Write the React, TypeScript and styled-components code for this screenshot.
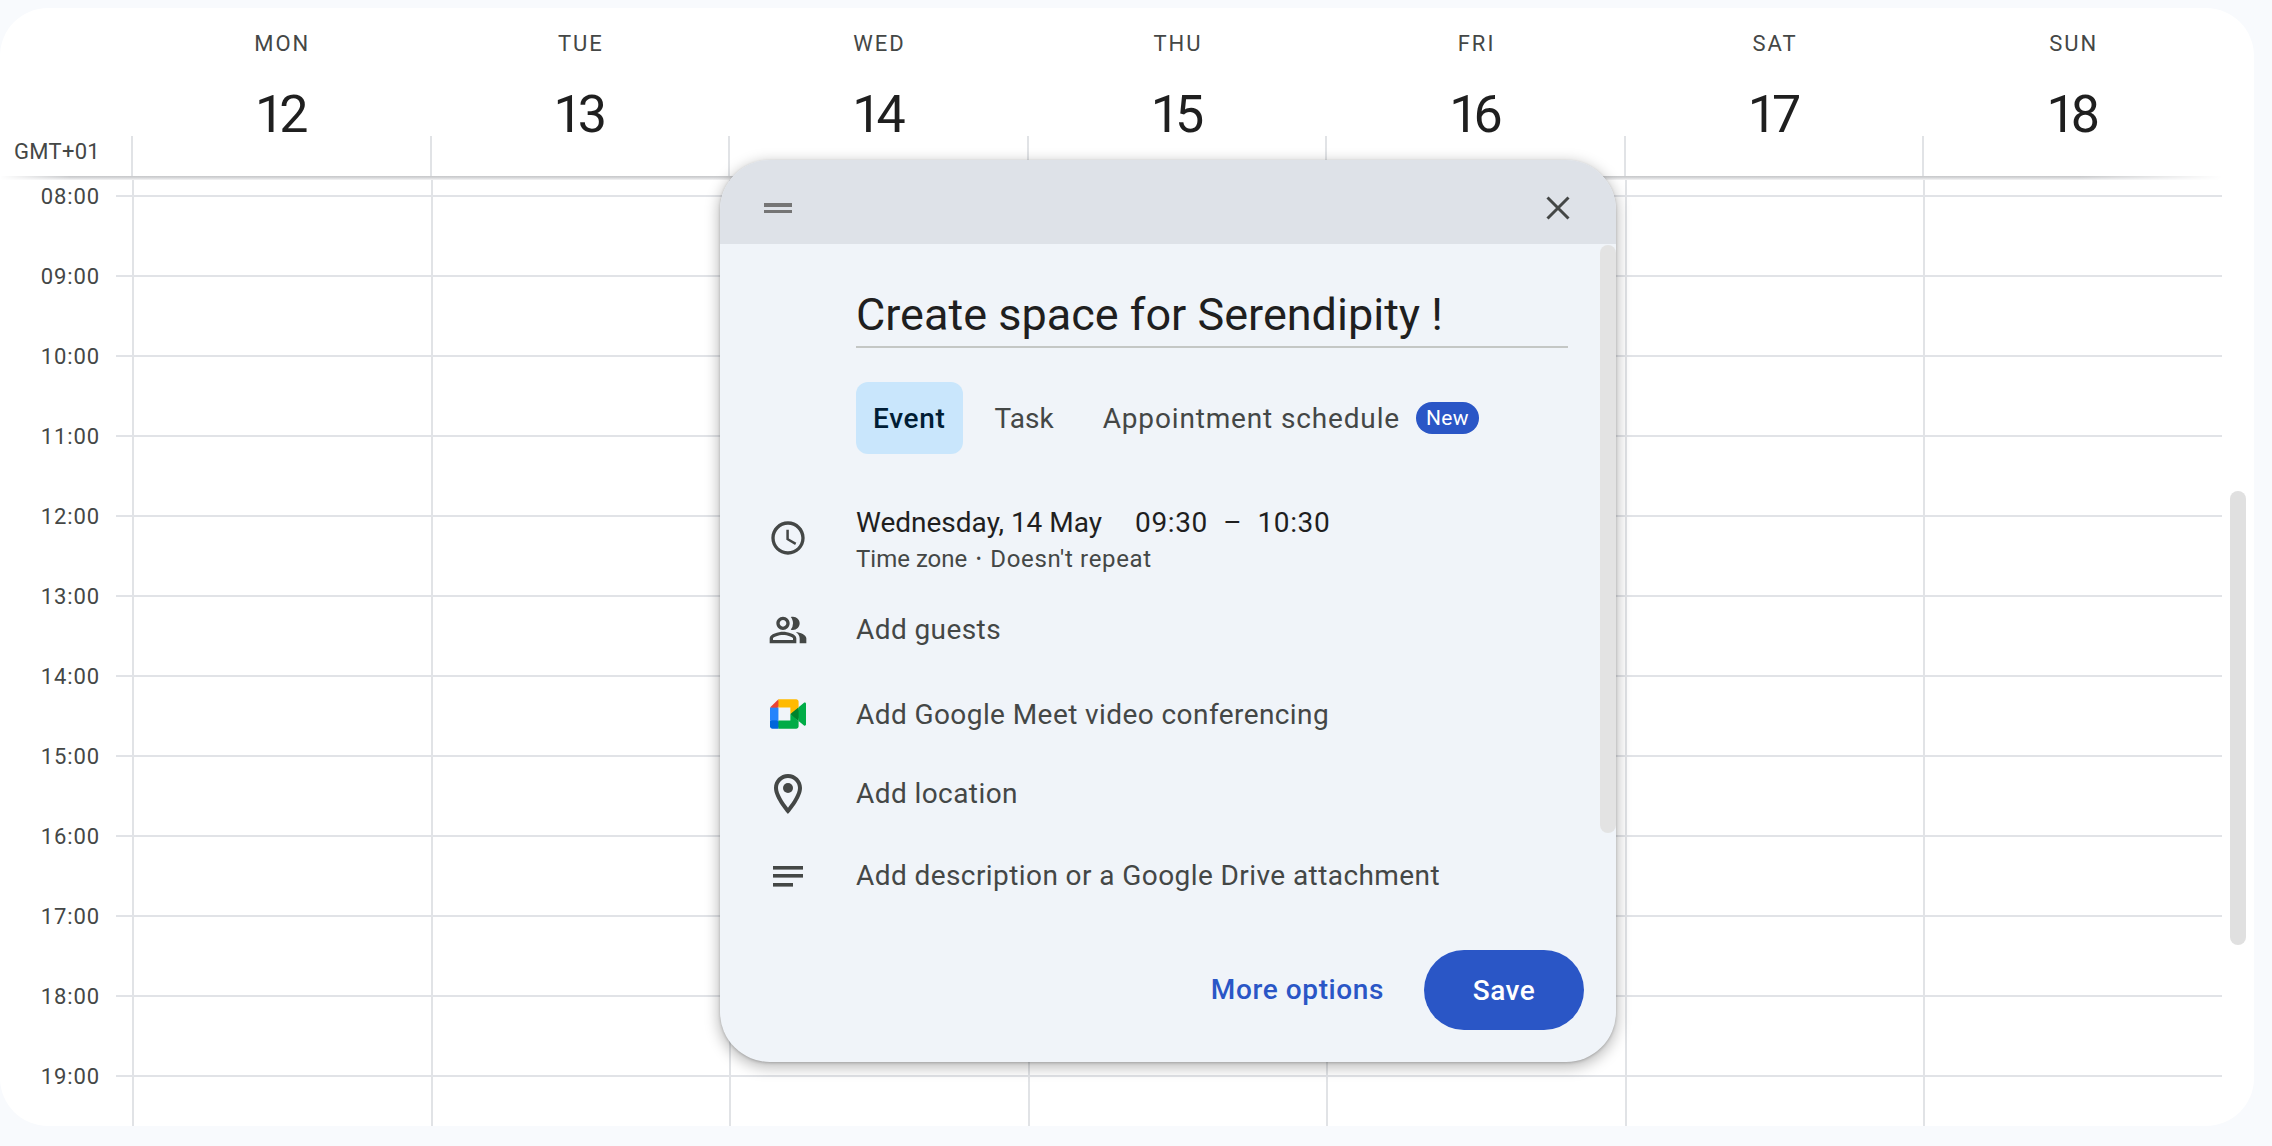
import React from 'react';
import styled, { createGlobalStyle } from 'styled-components';

const DAYS = [
  { name: 'MON', date: 12 },
  { name: 'TUE', date: 13 },
  { name: 'WED', date: 14 },
  { name: 'THU', date: 15 },
  { name: 'FRI', date: 16 },
  { name: 'SAT', date: 17 },
  { name: 'SUN', date: 18 },
];

const HOURS = ['08:00', '09:00', '10:00', '11:00', '12:00', '13:00', '14:00', '15:00', '16:00', '17:00', '18:00', '19:00'];

const GlobalStyle = createGlobalStyle`
  html, body {
    margin: 0;
    padding: 0;
    background: #f8fafd;
    font-family: Roboto, "Liberation Sans", sans-serif;
  }
`;

function Cells() {
  return (
    <CellGrid>
      <span />
      {DAYS.map((d) => (
        <DayCell key={d.name} />
      ))}
    </CellGrid>
  );
}

export default function App() {
  return (
    <Page>
      <GlobalStyle />
      <Card>
        <DayHeader>
          {DAYS.map((d) => (
            <DayTitle key={d.name}>
              <DayName>{d.name}</DayName>
              <DayNumber>{d.date}</DayNumber>
            </DayTitle>
          ))}
        </DayHeader>
        <AllDayRow>
          <Zone>GMT+01</Zone>
          {DAYS.map((d) => (
            <AllDayCell key={d.name} />
          ))}
        </AllDayRow>
        <HeaderRule />
        <Body>
          <HourRow $height={15}>
            <span />
            <Track $plain>
              <Cells />
            </Track>
          </HourRow>
          {HOURS.map((h, i) => (
            <HourRow key={h} $height={i === HOURS.length - 1 ? 51 : 80}>
              <TimeLabel>{h}</TimeLabel>
              <Track>
                <Cells />
              </Track>
            </HourRow>
          ))}
        </Body>
        <PageScrollThumb />
      </Card>

      <Popup>
        <PopupBar>
          <Handle>
            <i />
            <i />
          </Handle>
          <svg width="24" height="24" viewBox="0 0 24 24" fill="none" stroke="#444746" strokeWidth="3">
            <path d="M1.5 1.5l21 21M22.5 1.5l-21 21" />
          </svg>
        </PopupBar>
        <PopupBody>
          <TitleBox>Create space for Serendipity !</TitleBox>
          <Tabs>
            <Tab $active $spacing={0.7}>Event</Tab>
            <Tab $spacing={0}>Task</Tab>
            <Tab $tight $spacing={0.85}>Appointment schedule</Tab>
            <NewBadge>New</NewBadge>
          </Tabs>

          <Row $height={96}>
            <IconSlot>
              <svg width="40" height="40" viewBox="0 0 24 24" fill="#444746">
                <path d="M11.99 2C6.47 2 2 6.48 2 12s4.47 10 9.99 10C17.52 22 22 17.52 22 12S17.52 2 11.99 2zM12 20c-4.42 0-8-3.58-8-8s3.58-8 8-8 8 3.58 8 8-3.58 8-8 8zm.5-13H11v6l5.25 3.15.75-1.23-4.5-2.67z" />
              </svg>
            </IconSlot>
            <DateBlock>
              <DateLine>
                <span>Wednesday, 14 May</span>
                <TimeRange>09:30 &nbsp;–&nbsp; 10:30</TimeRange>
              </DateLine>
              <SubLine>
                <span>Time zone</span>
                <Dot>•</Dot>
                <Repeat>Doesn't repeat</Repeat>
              </SubLine>
            </DateBlock>
          </Row>
          <Row $height={88}>
            <IconSlot>
              <svg width="40" height="40" viewBox="0 0 24 24" fill="#444746">
                <path d="M15 8c0-1.42-.5-2.73-1.33-3.76.42-.14.86-.24 1.33-.24 2.21 0 4 1.79 4 4s-1.79 4-4 4c-.43 0-.84-.09-1.23-.21-.03-.01-.06-.02-.1-.03A5.98 5.98 0 0 0 15 8zm1.66 5.13C18.03 14.06 19 15.32 19 17v3h4v-3c0-2.18-3.58-3.47-6.34-3.87zM9 6c-1.1 0-2 .9-2 2s.9 2 2 2 2-.9 2-2-.9-2-2-2m0 9c-2.7 0-5.8 1.29-6 2.01V18h12v-1c-.2-.71-3.3-2-6-2m0-11c2.21 0 4 1.79 4 4s-1.79 4-4 4-4-1.79-4-4 1.79-4 4-4zm0 9c2.67 0 8 1.34 8 4v3H1v-3c0-2.66 5.33-4 8-4z" />
              </svg>
            </IconSlot>
            <RowText>Add guests</RowText>
          </Row>
          <Row $height={80}>
            <IconSlot>
              <svg width="36" height="30" viewBox="0 0 87.5 72">
                <path fill="#00832d" d="M49.5 36l8.53 9.75 11.47 7.33 2-17.02-2-16.64-11.69 6.44z" />
                <path fill="#0066da" d="M0 51.5V66c0 3.315 2.685 6 6 6h14.5l3-10.96-3-9.54-9.95-3z" />
                <path fill="#e94235" d="M20.5 0L0 20.5l10.55 3 9.95-3 2.95-9.41z" />
                <path fill="#2684fc" d="M20.5 20.5H0v31h20.5z" />
                <path fill="#00ac47" d="M82.6 8.68L69.5 19.42v33.66l13.16 10.79c1.97 1.54 4.85.135 4.85-2.37V11c0-2.535-2.945-3.925-4.91-2.32zM49.5 36v15.5h-29V72h43c3.315 0 6-2.685 6-6V53.08z" />
                <path fill="#ffba00" d="M63.5 0h-43v20.5h29V36l20-16.57V6c0-3.315-2.685-6-6-6z" />
              </svg>
            </IconSlot>
            <RowText $lift={0}>Add Google Meet video conferencing</RowText>
          </Row>
          <Row $height={79}>
            <IconSlot>
              <svg width="48" height="48" viewBox="0 0 24 24" fill="#444746">
                <path d="M12 2C8.13 2 5 5.13 5 9c0 5.25 7 13 7 13s7-7.75 7-13c0-3.87-3.13-7-7-7zM7 9c0-2.76 2.24-5 5-5s5 2.24 5 5c0 2.88-2.88 7.19-5 9.88C9.92 16.21 7 11.85 7 9z" />
                <circle cx="12" cy="9" r="2.5" />
              </svg>
            </IconSlot>
            <RowText $lift={1}>Add location</RowText>
          </Row>
          <Row $height={86}>
            <IconSlot>
              <svg width="30" height="21" viewBox="0 0 30 21" fill="#444746">
                <rect x="0" y="0" width="30" height="3.6" />
                <rect x="0" y="8" width="30" height="3.6" />
                <rect x="0" y="17" width="20" height="3.6" />
              </svg>
            </IconSlot>
            <RowText>Add description or a Google Drive attachment</RowText>
          </Row>

          <Footer>
            <MoreOptions>More options</MoreOptions>
            <SaveButton>Save</SaveButton>
          </Footer>
        </PopupBody>
        <PopupScrollThumb />
      </Popup>
    </Page>
  );
}

const Page = styled.div`
  position: relative;
  box-sizing: border-box;
  width: 2272px;
  height: 1146px;
  padding: 8px 18px 20px 0;
  background: #f8fafd;
  overflow: hidden;
`;

const Card = styled.div`
  position: relative;
  height: 100%;
  display: flex;
  flex-direction: column;
  background: #fff;
  border-radius: 48px;
  overflow: hidden;
`;

const DayHeader = styled.div`
  display: grid;
  grid-template-columns: repeat(7, 298.57px);
  height: 128px;
  padding-left: 131px;
`;

const DayTitle = styled.div`
  display: flex;
  flex-direction: column;
  align-items: center;
`;

const DayName = styled.div`
  margin: 21px 0 0 4px;
  font-size: 22px;
  line-height: 30px;
  letter-spacing: 2px;
  font-weight: 400;
  color: #444746;
`;

const DayNumber = styled.div`
  margin: 26px 0 0 -2px;
  font-size: 52px;
  line-height: 60px;
  letter-spacing: -5px;
  font-weight: 400;
  color: #1f1f1f;
`;

const AllDayRow = styled.div`
  display: grid;
  grid-template-columns: 131px repeat(7, 298.57px);
  height: 41px;
`;

const Zone = styled.div`
  padding: 3px 0 0 14px;
  font-size: 22px;
  line-height: 26px;
  letter-spacing: 0.3px;
  color: #444746;
`;

const AllDayCell = styled.div`
  border-left: 2px solid #e1e3e6;
`;

// fades out at both ends, with a soft edge below
const HeaderRule = styled.div`
  flex: none;
  width: 2222px;
  height: 4px;
  margin-top: -1px;
  background: linear-gradient(to bottom, #c6c7c9 0, #d4d5d7 40%, #f5f5f6 100%);
  mask-image: linear-gradient(to right, transparent 0, #000 70px, #000 2080px, transparent 100%);
`;

const Body = styled.div`
  flex: 1;
  padding-right: 32px;
`;

const HourRow = styled.div<{ $height: number }>`
  display: grid;
  grid-template-columns: 116px 1fr;
  height: ${(p) => p.$height}px;
`;

const TimeLabel = styled.div`
  margin-top: -12px;
  padding-right: 16px;
  text-align: right;
  font-size: 22px;
  line-height: 28px;
  letter-spacing: 0.9px;
  color: #444746;
`;

const Track = styled.div<{ $plain?: boolean }>`
  box-sizing: border-box;
  border-top: ${(p) => (p.$plain ? '0' : '2px solid #e1e3e7')};
`;

const CellGrid = styled.div`
  display: grid;
  grid-template-columns: 16px repeat(7, 1fr);
  height: 100%;
`;

const DayCell = styled.div`
  border-left: 2px solid #e1e3e6;
`;

const PageScrollThumb = styled.div`
  position: absolute;
  top: 483px;
  right: 8px;
  width: 16px;
  height: 454px;
  border-radius: 8px;
  background: #e0e0e0;
`;

const Popup = styled.div`
  position: absolute;
  left: 720px;
  top: 160px;
  width: 896px;
  height: 902px;
  display: flex;
  flex-direction: column;
  border-radius: 50px;
  overflow: hidden;
  background: #f0f4f9;
  box-shadow: 0 4px 14px 2px rgba(0, 0, 0, 0.25), 0 1px 3px rgba(0, 0, 0, 0.2);
`;

const PopupBar = styled.div`
  flex: none;
  box-sizing: border-box;
  height: 84px;
  display: flex;
  align-items: center;
  justify-content: space-between;
  padding: 12px 46px 0 44px;
  background: #dee2e8;
`;

const Handle = styled.div`
  display: flex;
  flex-direction: column;
  gap: 3px;
  i {
    display: block;
    width: 28px;
    height: 3.5px;
    background: #757575;
  }
`;

const PopupBody = styled.div`
  flex: 1;
  display: flex;
  flex-direction: column;
`;

const TitleBox = styled.div`
  box-sizing: border-box;
  width: 712px;
  height: 66px;
  margin: 38px 0 0 136px;
  padding-top: 3px;
  border-bottom: 2px solid #c4c7c5;
  font-size: 45px;
  line-height: 60px;
  color: #1f1f1f;
`;

const Tabs = styled.div`
  display: flex;
  align-items: center;
  height: 72px;
  margin: 34px 0 36px 136px;
`;

const Tab = styled.div<{ $active?: boolean; $tight?: boolean; $spacing: number }>`
  height: 72px;
  display: flex;
  align-items: center;
  padding: 0 ${(p) => (p.$tight ? 0 : 17)}px 0 17px;
  margin-right: ${(p) => (p.$tight ? 16 : 15)}px;
  border-radius: 12px;
  font-size: 28px;
  letter-spacing: ${(p) => p.$spacing}px;
  font-weight: ${(p) => (p.$active ? 500 : 400)};
  color: ${(p) => (p.$active ? '#001d35' : '#444746')};
  background: ${(p) => (p.$active ? '#c9e6fc' : 'transparent')};
`;

const NewBadge = styled.div`
  width: 63px;
  height: 32px;
  display: flex;
  align-items: center;
  justify-content: center;
  border-radius: 16px;
  background: #2a56c6;
  color: #fff;
  font-size: 21px;
  letter-spacing: 0.4px;
  font-weight: 400;
`;

const Row = styled.div<{ $height: number }>`
  display: grid;
  grid-template-columns: 136px 1fr;
  align-items: center;
  height: ${(p) => p.$height}px;
`;

const IconSlot = styled.div`
  display: flex;
  align-items: center;
  justify-content: center;
`;

const RowText = styled.div<{ $lift?: number }>`
  padding-bottom: ${(p) => p.$lift ?? 2}px;
  font-size: 28px;
  letter-spacing: 0.42px;
  color: #444746;
`;

const DateBlock = styled.div`
  padding-top: 3px;
`;

const DateLine = styled.div`
  display: flex;
  gap: 33px;
  font-size: 28px;
  line-height: 34px;
  color: #1f1f1f;
`;

const TimeRange = styled.span`
  letter-spacing: 0.65px;
`;

const SubLine = styled.div`
  display: flex;
  align-items: center;
  margin-top: 4px;
  font-size: 24px;
  line-height: 30px;
  color: #444746;
`;

const Dot = styled.span`
  width: 23px;
  text-align: center;
  font-size: 16px;
`;

const Repeat = styled.span`
  letter-spacing: 0.65px;
`;

const Footer = styled.div`
  display: flex;
  align-items: center;
  justify-content: flex-end;
  gap: 40px;
  margin-top: 31px;
  padding-right: 32px;
`;

const MoreOptions = styled.div`
  padding-bottom: 2px;
  font-size: 28px;
  letter-spacing: 0.6px;
  font-weight: 500;
  color: #2a56c6;
`;

const SaveButton = styled.div`
  width: 160px;
  height: 80px;
  display: flex;
  align-items: center;
  justify-content: center;
  border-radius: 40px;
  background: #2a56c6;
  color: #fff;
  font-size: 28px;
  letter-spacing: 0.5px;
  font-weight: 500;
`;

const PopupScrollThumb = styled.div`
  position: absolute;
  top: 85px;
  right: 0;
  width: 16px;
  height: 588px;
  border-radius: 8px;
  background: #e3e3e3;
`;
